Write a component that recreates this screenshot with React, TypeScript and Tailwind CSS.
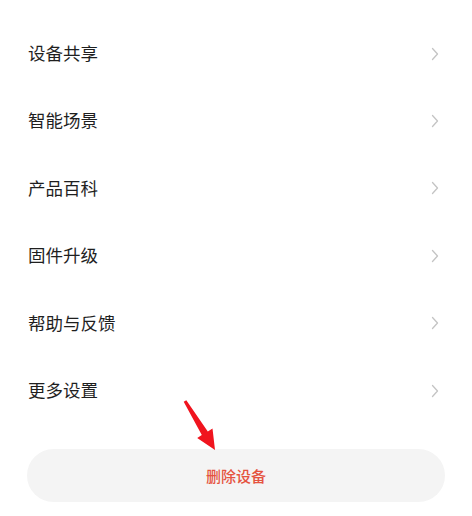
const items = ["设备共享", "智能场景", "产品百科", "固件升级", "帮助与反馈", "更多设置"];

function Chevron() {
  return (
    <svg width="8" height="14" viewBox="0 0 8 14" fill="none" className="mt-[2px]">
      <path d="M1.5 1.5 L6.5 7 L1.5 12.5" stroke="#c4c4c4" strokeWidth="1.3" strokeLinecap="round" strokeLinejoin="round" />
    </svg>
  );
}

export default function App() {
  return (
    <div
      className="relative w-[472px] h-[516px] bg-white overflow-hidden"
      style={{ fontFamily: '"Noto Sans CJK SC", "Noto Sans", sans-serif' }}
    >
      <div className="pt-[19px] flex flex-col">
        {items.map((name) => (
          <div key={name} className="h-[67.4px] flex items-center justify-between pl-[28px] pr-[33px]">
            <span className="text-[17.5px] text-[#1f1f1f] leading-none">{name}</span>
            <Chevron />
          </div>
        ))}
      </div>
      <div className="mt-[26px] mx-[27px] h-[53px] rounded-full bg-[#f4f4f4] flex items-center justify-center">
        <span className="text-[15px] font-medium text-[#e5533f] leading-none">删除设备</span>
      </div>
      {/* red annotation arrow */}
      <svg className="absolute left-0 top-0" width="472" height="516" viewBox="0 0 472 516">
        <path d="M183.7 401.8 L186.3 400.2 L207.8 431.5 L212.5 428.6 L215 450 L197.2 438 L201.8 435.1 Z" fill="#f0141e" />
      </svg>
    </div>
  );
}
